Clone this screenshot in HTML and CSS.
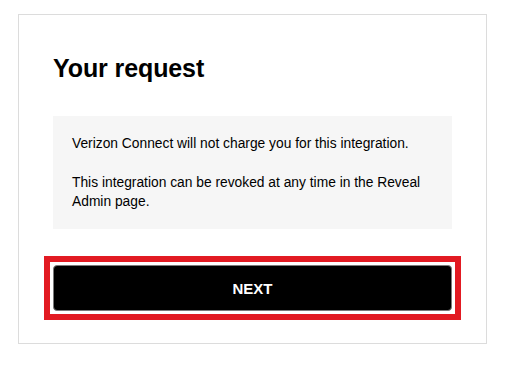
FILE: index.html
```html
<!DOCTYPE html>
<html lang="en">
<head>
<meta charset="utf-8">
<title>Your request</title>
<link rel="stylesheet" href="styles.css">
</head>
<body>
<div class="page">
  <section class="card">
    <h1 class="title">Your request</h1>
    <div class="notice">
      <p>Verizon Connect will not charge you for this integration.</p>
      <p>This integration can be revoked at any time in the Reveal Admin page.</p>
    </div>
    <div class="highlight">
      <button class="next" type="button">NEXT</button>
    </div>
  </section>
</div>
</body>
</html>
```
FILE: styles.css
```css
html, body {
  margin: 0;
  padding: 0;
  background: #ffffff;
}

body {
  font-family: "Liberation Sans", Arial, sans-serif;
  color: #000000;
}

.page {
  padding: 14px 0 0 18px;
}

.card {
  box-sizing: border-box;
  width: 469px;
  height: 330px;
  border: 1px solid #dcdcdc;
  padding: 38px 34px 0 34px;
}

.title {
  margin: 0;
  font-size: 25px;
  line-height: 30px;
  font-weight: 700;
  letter-spacing: -0.1px;
}

.notice {
  margin-top: 33px;
  background: #f6f6f6;
  padding: 18px 18px 18px 19px;
  height: 113px;
  box-sizing: border-box;
}

.notice p {
  margin: 0;
  font-size: 13.8px;
  line-height: 19px;
  color: #000000;
}

.notice p + p {
  margin-top: 20px;
}

.highlight {
  margin: 27px 0 0 -9px;
  width: 399px;
  padding: 3px;
  border: 6px solid #e21a22;
}

.next {
  display: block;
  box-sizing: border-box;
  width: 399px;
  height: 46px;
  background: #000000;
  color: #ffffff;
  border: 1px solid #7a7a7a;
  border-radius: 4px;
  font-family: "Liberation Sans", Arial, sans-serif;
  font-size: 15px;
  font-weight: 700;
  padding: 0;
}
```
